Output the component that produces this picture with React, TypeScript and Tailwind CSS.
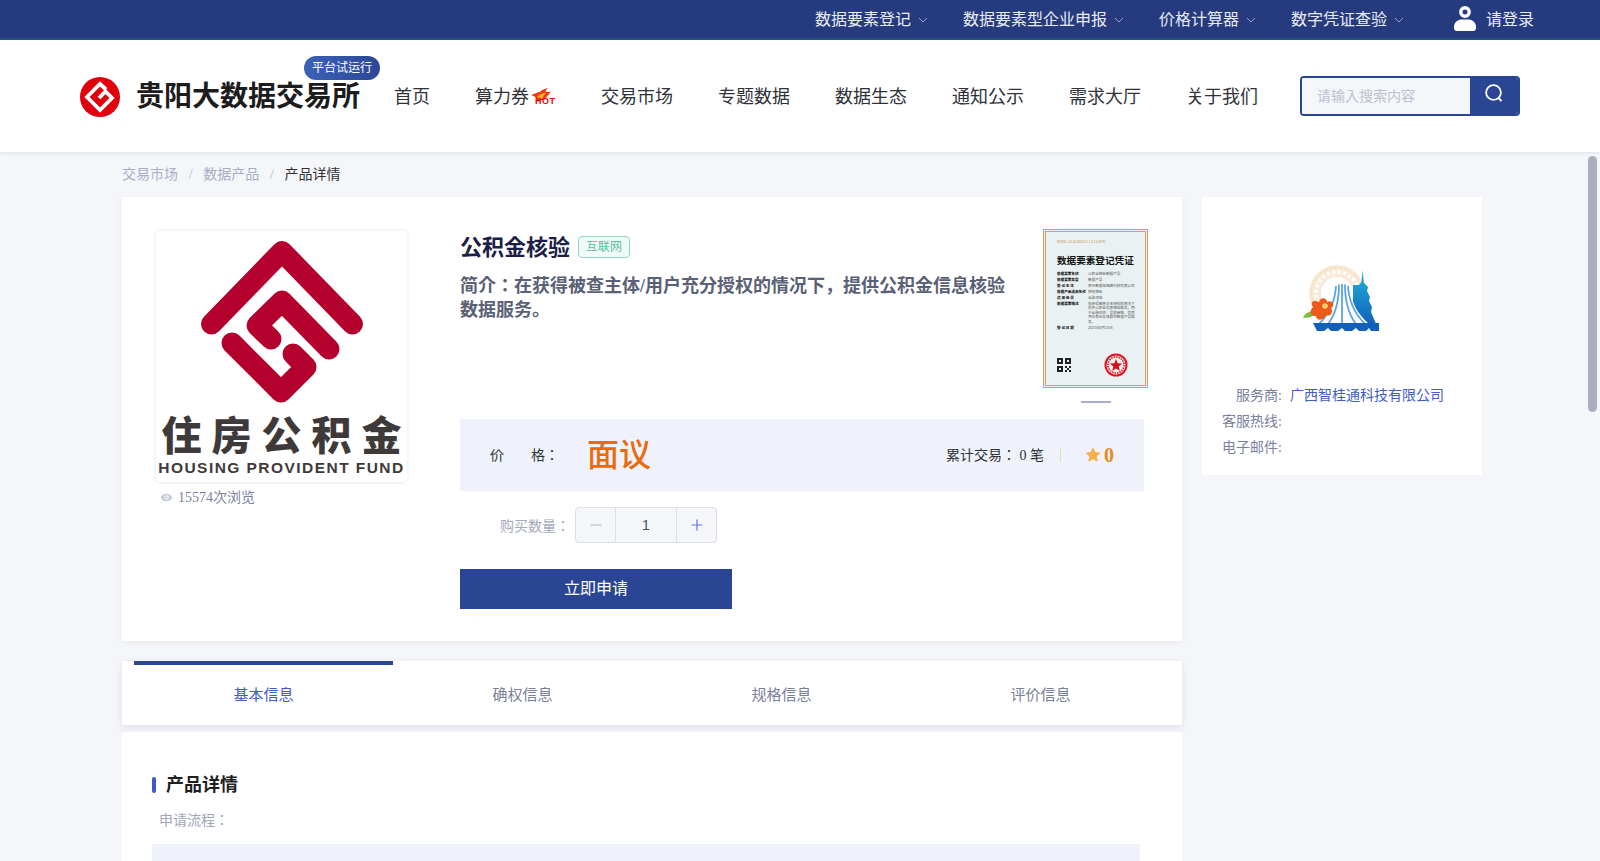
const TOP_LINKS = ["数据要素登记", "数据要素型企业申报", "价格计算器", "数字凭证查验"];
const NAV = ["交易市场", "专题数据", "数据生态", "通知公示", "需求大厅", "关于我们"];
const TABS = ["基本信息", "确权信息", "规格信息", "评价信息"];

const CERT_ROWS = [
  ["数据要素名称", "公积金核验数据产品"],
  ["数据要素类型", "数据产品"],
  ["登 记 主 体", "贵州数据宝网络科技有限公司"],
  ["数据产品通用名称", "授权核验"],
  ["适 用 场 景", "金融领域"],
];

function BrandLogo() {
  return (
    <svg viewBox="0 0 40 40" className="h-10 w-10 shrink-0">
      <circle cx="20" cy="20" r="20" fill="#e2000f" />
      <path
        d="M26 12.5 L20 7 L7 20 L20 33 L32 21 L25.5 14.5 L19 21"
        fill="none"
        stroke="#fff"
        strokeWidth="3.8"
      />
    </svg>
  );
}

function HotBadge() {
  return (
    <span className="relative ml-[2px] block h-[30px] w-[25px]">
      <svg viewBox="0 0 20 12" className="absolute left-0 top-[6px] h-[12px] w-[20px]">
        <path d="M0 7 C4 6 6 4 9 4 C10 2 13 1 17 0 C15 2 14 3 15 4 C17 4 19 4 20 3 C18 7 15 9 12 12 L6 12 C5 9 3 8 0 7Z" fill="#f2380f" />
        <path d="M6 9 C8 7 11 5 15 5 C13 7 12 9 11 11Z" fill="#fbb02d" />
      </svg>
      <span className="absolute left-[4px] top-[15px] text-[9px] font-bold leading-[9px] tracking-[0.5px] text-[#f00000] [font-family:'Liberation_Sans',sans-serif]">
        HOT
      </span>
    </span>
  );
}

function Certificate() {
  return (
    <div className="h-[159px] w-[105px] border-[3px] border-double border-[#cf9f5c] bg-[#eaf1f2] p-[2px]">
      <div className="flex h-full flex-col pl-[9px] pr-[5px] pt-[6px] [font-family:'Noto_Sans_CJK_SC',sans-serif]">
        <p className="text-[3px] leading-[5px] text-[#c08a3a]">DOOR-1 12 16 2023 8 1 1-2 1 5 28 91</p>
        <p className="mt-[9px] whitespace-nowrap text-[9.6px] font-bold leading-[12px] text-[#111]">数据要素登记凭证</p>
        <div className="mt-[6px] flex flex-col gap-[2px]">
          {CERT_ROWS.map(([k, v]) => (
            <div key={k} className="flex text-[3.6px] leading-[4px]">
              <span className="w-[31px] shrink-0 font-bold text-[#111]">{k}</span>
              <span className="whitespace-nowrap text-[#555]">{v}</span>
            </div>
          ))}
          <div className="flex text-[3.6px] leading-[4.4px]">
            <span className="w-[31px] shrink-0 font-bold text-[#111]">数据要素描述</span>
            <span className="text-[#555]">在获得被查主体授权的情况下提供公积金信息核验服务，用于金融风控、贷前审核、信用评估等业务场景的数据产品服务。</span>
          </div>
          <div className="flex text-[3.6px] leading-[4px]">
            <span className="w-[31px] shrink-0 font-bold text-[#111]">登 记 日 期</span>
            <span className="text-[#555]">2023年8月25日</span>
          </div>
        </div>
        <div className="mt-auto mb-[6px] flex items-center gap-[33px]">
          <svg viewBox="0 0 7 7" className="h-[14px] w-[14px]" shapeRendering="crispEdges">
            <path
              d="M0 0h3v3H0zM4 0h3v3H4zM0 4h3v3H0zM4 4h1v1H4zM6 4h1v1H6zM5 5h1v1H5zM4 6h1v1H4zM6 6h1v1H6zM1 1h1v1H1zM5 1h1v1H5zM1 5h1v1H1z"
              fill="#222"
              fillRule="evenodd"
            />
          </svg>
          <svg viewBox="0 0 24 24" className="h-[24px] w-[24px]">
            <circle cx="12" cy="12" r="10.5" fill="#fdeff0" stroke="#e1131f" strokeWidth="2" />
            <circle cx="12" cy="12" r="8" fill="none" stroke="#e1131f" strokeWidth="1.6" strokeDasharray="1.5 1" />
            <path d="M12 6 l1.7 4.2 4.5.3-3.5 2.9 1.1 4.4-3.8-2.4-3.8 2.4 1.1-4.4-3.5-2.9 4.5-.3z" fill="#d8101c" />
          </svg>
        </div>
      </div>
    </div>
  );
}

function ProviderLogo() {
  return (
    <svg viewBox="0 0 90 85" className="h-[85px] w-[90px]">
      <defs>
        <linearGradient id="tower" x1="0" y1="0" x2="0" y2="1">
          <stop offset="0" stopColor="#22b2dc" />
          <stop offset="1" stopColor="#1261ba" />
        </linearGradient>
      </defs>
      <circle cx="42" cy="38" r="28" fill="#f8ead6" />
      <circle cx="42" cy="38" r="21" fill="none" stroke="#fff" strokeWidth="3.500" strokeDasharray="3 2.500" />
      <circle cx="42" cy="38" r="25.500" fill="none" stroke="#f2d9b6" strokeWidth="1" strokeDasharray="2 1.500" />
      <circle cx="42" cy="38" r="16" fill="#fff" />
      <path d="M67.500 15 L69 28 L73 32 L72 36 L75 42 L74 46 L77 52 L76 57 L79 64 L81 69 L58 69 L58 30 L64 30 L66.500 27Z" fill="url(#tower)" />
      <path d="M39 31 C44 27 50 27 55 31 C56 48 62 58 74 69 L20 69 C32 57 38 46 39 31Z" fill="#fff" />
      <path d="M41 31 C40 48 33 60 24 69 M44 29.500 C44 48 40 60 33 69 M47 29 L47 69 M50 29.500 C50 48 54 60 61 69 M53 31 C54 48 61 60 70 69" fill="none" stroke="#5aa5e4" strokeWidth="1.800" />
      <path d="M18 68 H84 V76 H76 L74 73 L71 76 H64 L61 73 L57 76 H50 L47 73 L43 76 H36 L33 73 L29 76 H22Z" fill="#1260b8" />
      <path d="M8 63 C10 58 14 56 19 56 C20 60 18 63 8 63Z" fill="#7cc043" />
      <path d="M18 52 C14 46 20 45 24 47 C25 42 32 42 32 47 C37 44 41 50 36 53 C39 58 35 62 31 60 C29 66 21 66 21 61 C15 62 14 56 18 52Z" fill="#ee5a1a" />
      <circle cx="30" cy="51" r="2.800" fill="#fbd36a" />
    </svg>
  );
}

function FundMark() {
  return (
    <div className="flex h-[251px] w-[251px] flex-col items-center rounded-md bg-white">
      <svg viewBox="0 0 251 180" className="h-[180px] w-[251px] shrink-0">
        <g fill="none" stroke="#b3002d" strokeWidth="21" strokeLinecap="round" strokeLinejoin="round">
          <path d="M55.500 93 L126 20.500 L196.500 93" />
          <path d="M173 118 L126 70 L101 94.500 L115 108" />
          <path d="M76 112 L125 161 L150 136 L137 123" />
        </g>
      </svg>
      <p className="h-[44px] whitespace-nowrap pl-[10px] text-[40px] font-black leading-[44px] tracking-[10px] text-[#3e3a39] [font-family:'Noto_Sans_CJK_SC',sans-serif]">
        住房公积金
      </p>
      <p className="mt-[4px] whitespace-nowrap text-[15.500px] font-bold leading-[18px] tracking-[1.450px] text-[#3e3a39] [font-family:'Liberation_Sans',sans-serif]">
        HOUSING PROVIDENT FUND
      </p>
    </div>
  );
}

export default function App() {
  return (
    <div className="relative h-[861px] w-full overflow-hidden bg-[#f5f6fa] [font-family:'Liberation_Serif','Noto_Sans_CJK_JP',serif]">
      {/* 顶部条 */}
      <div className="flex h-[40px] items-center justify-end border-b-2 border-[#25527e] bg-[#263b7e] pr-[66px] pt-[2px] text-[16px] text-[#e8ebf5]">
        {TOP_LINKS.map((t) => (
          <div key={t} className="mr-[35px] flex items-center gap-[7px]">
            <span>{t}</span>
            <svg viewBox="0 0 10 6" className="h-[6px] w-[10px]" fill="none" stroke="#96a2c8" strokeWidth="1">
              <path d="M1 1 L5 5 L9 1" />
            </svg>
          </div>
        ))}
        <div className="ml-[15px] flex items-center gap-[10px]">
          <svg viewBox="0 0 22 25" className="-mt-[3px] h-[25px] w-[22px]">
            <circle cx="11" cy="6" r="4.200" fill="#263b7e" stroke="#fff" strokeWidth="3.400" />
            <path d="M0 21 C0 16 4 13.500 8 13.500 H14 C18 13.500 22 16 22 21 V22 C22 24 21 25 19 25 H3 C1 25 0 24 0 22Z" fill="#fff" />
          </svg>
          <span>请登录</span>
        </div>
      </div>

      {/* 导航 */}
      <header className="relative z-10 flex h-[112px] items-center bg-white pl-[80px] pt-[2px] shadow-[0_1px_4px_rgba(40,50,90,0.1)]">
        <BrandLogo />
        <div className="relative ml-[16px]">
          <h1 className="whitespace-nowrap text-[28px] font-bold leading-[36px] text-[#1c1c1c]">贵阳大数据交易所</h1>
          <span className="absolute -top-[23px] left-[168px] flex h-[24px] w-[76px] items-center justify-center rounded-full bg-gradient-to-r from-[#3b62b8] to-[#2c4796] text-[12px] text-white">
            平台试运行
          </span>
        </div>
        <nav className="ml-[34px] flex items-center gap-[45px] text-[18px] text-[#30323a]">
          <span>首页</span>
          <span className="flex items-center">
            算力券
            <HotBadge />
          </span>
          {NAV.map((n) => (
            <span key={n}>{n}</span>
          ))}
        </nav>
        <div className="-mt-[2px] ml-[42px] flex h-[40px] w-[220px] overflow-hidden rounded border-2 border-[#2b4595]">
          <input
            placeholder="请输入搜索内容"
            className="h-full w-[168px] bg-[#f5f6fa] pl-[15px] pt-[2px] text-[14px] outline-none placeholder:text-[#bcc0cf]"
          />
          <div className="flex flex-1 items-start justify-center bg-[#2b4595] pt-[5px]">
            <svg viewBox="0 0 20 20" className="h-[20px] w-[20px]" fill="none" stroke="#fff" strokeWidth="1.800" strokeLinecap="round">
              <circle cx="9.500" cy="9.500" r="7.400" />
              <path d="M15 15.500 L17 17.500" />
            </svg>
          </div>
        </div>
      </header>

      {/* 面包屑 */}
      <div className="flex h-[45px] items-center pl-[122px] text-[14px] text-[#a8afc4]">
        <span>交易市场</span>
        <span className="px-[10.700px] text-[#b5bbcc]">/</span>
        <span>数据产品</span>
        <span className="px-[10.700px] text-[#b5bbcc]">/</span>
        <span className="text-[#303133]">产品详情</span>
      </div>

      <div className="flex gap-[20px] pl-[122px]">
        <div className="w-[1060px]">
          {/* 产品卡片 */}
          <section className="flex h-[444px] bg-white p-[32px] shadow-[0_2px_6px_rgba(40,50,90,0.06)]">
            <div className="w-[255px] shrink-0">
              <div className="rounded-md border-2 border-[#f5f6fa]">
                <FundMark />
              </div>
              <div className="mt-[4px] flex h-[18px] items-center gap-[5px] pl-[6px] text-[14px] text-[#7a819c]">
                <svg viewBox="0 0 24 24" className="h-[13px] w-[13px]" fill="#c6ccdc">
                  <path d="M12 5C7 5 3 8 1 12c2 4 6 7 11 7s9-3 11-7c-2-4-6-7-11-7zm0 11a4 4 0 1 1 0-8 4 4 0 0 1 0 8zm0-6.200a2.200 2.200 0 1 0 0 4.400 2.200 2.200 0 0 0 0-4.400z" />
                </svg>
                15574次浏览
              </div>
            </div>

            <div className="ml-[51px] w-[684px] shrink-0">
              <div className="flex h-[190px] justify-between">
                <div className="w-[552px]">
                  <div className="flex h-[36px] items-center gap-[8px]">
                    <h2 className="text-[22px] font-bold text-[#1a2045]">公积金核验</h2>
                    <span className="flex h-[22px] w-[52px] items-center justify-center rounded border border-[#92d8c3] bg-[#f0faf6] text-[12px] text-[#5cbd9f]">
                      互联网
                    </span>
                  </div>
                  <p className="mt-[9px] text-[18px] font-bold leading-[24px] text-[#5a6176]">
                    简介：在获得被查主体/用户充分授权的情况下，提供公积金信息核验数据服务。
                  </p>
                </div>
                <div className="-mr-[4px] flex w-[105px] flex-col items-center">
                  <Certificate />
                  <span className="mt-[13px] h-[2px] w-[30px] bg-[#a8b0c8]" />
                </div>
              </div>

              <div className="flex h-[72px] items-center justify-between bg-[#eff2fa] pl-[30px] pr-[30px]">
                <div className="flex items-center">
                  <span className="flex w-[69px] justify-between text-[14px] text-[#303133]">
                    <span>价</span>
                    <span>格：</span>
                  </span>
                  <span className="ml-[28px] text-[32px] font-medium leading-[40px] text-[#ea6a0c]">面议</span>
                </div>
                <div className="flex items-center">
                  <span className="text-[14px] text-[#303133]">累计交易： 0 笔</span>
                  <span className="ml-[16px] h-[14px] w-px bg-[#f0d9a8]" />
                  <svg viewBox="0 0 24 24" className="ml-[24px] h-[16px] w-[16px]" fill="#f5b04a">
                    <path d="M12 1.800l3 6.600 7.200.8-5.400 4.800 1.500 7.100L12 17.500 5.700 21.100l1.500-7.100L1.800 9.200l7.200-.8z" stroke="#f5b04a" strokeWidth="1.500" strokeLinejoin="round" />
                  </svg>
                  <span className="ml-[3px] text-[20px] font-bold leading-[24px] text-[#e88a1e]">0</span>
                </div>
              </div>

              <div className="mt-[16px] flex h-[36px] items-center pl-[40px]">
                <span className="w-[70px] whitespace-nowrap pt-[2px] text-[14px] text-[#a3a9bc]">购买数量：</span>
                <div className="ml-[5px] flex h-[36px] w-[142px] overflow-hidden rounded border border-[#dcdfe6] bg-[#f5f6fa]">
                  <span className="flex w-[40px] items-center justify-center border-r border-[#dcdfe6]">
                    <svg viewBox="0 0 14 14" className="h-[14px] w-[14px]" stroke="#a8afc4" strokeWidth="1.200"><path d="M1.500 7h11" /></svg>
                  </span>
                  <span className="flex flex-1 items-center justify-center text-[14px] text-[#4a4f60] [font-family:'Liberation_Sans',sans-serif]">1</span>
                  <span className="flex w-[40px] items-center justify-center border-l border-[#dcdfe6]">
                    <svg viewBox="0 0 14 14" className="h-[14px] w-[14px]" stroke="#5b76e0" strokeWidth="1.200"><path d="M1.500 7h11M7 1.500v11" /></svg>
                  </span>
                </div>
              </div>

              <button className="mt-[26px] block h-[40px] w-[272px] bg-[#2b4595] text-[16px] text-white">立即申请</button>
            </div>
          </section>

          {/* 标签页 */}
          <div className="mt-[20px] flex h-[64px] bg-white px-[12px] shadow-[0_3px_8px_rgba(40,50,90,0.1)]">
            {TABS.map((t, i) => (
              <div
                key={t}
                className={
                  i === 0
                    ? "flex flex-1 items-center justify-center border-t-4 border-[#2b4595] text-[15px] text-[#3f5cc0]"
                    : "flex flex-1 items-center justify-center border-t-4 border-transparent text-[15px] text-[#7a8099]"
                }
              >
                {t}
              </div>
            ))}
          </div>

          {/* 详情 */}
          <section className="mt-[7px] h-[200px] bg-white pl-[30px] pr-[42px] pt-[45px]">
            <div className="flex h-[16px] items-center gap-[10px]">
              <span className="h-[16px] w-[4px] rounded-sm bg-[#3a5bc7]" />
              <h3 className="text-[18px] font-bold text-[#1f1f1f]">产品详情</h3>
            </div>
            <p className="mt-[17px] pl-[7px] text-[14px] leading-[22px] text-[#a0a6b8]">申请流程：</p>
            <div className="mt-[12px] h-[40px] bg-[#eff2fa]" />
          </section>
        </div>

        {/* 服务商 */}
        <aside className="h-[278px] w-[280px] bg-white pt-[58px]">
          <div className="flex justify-center pr-[4px]">
            <ProviderLogo />
          </div>
          <div className="mt-[46px] flex flex-col gap-[6px] text-[14px] leading-[20px] text-[#7a819c]">
            <div className="flex">
              <span className="w-[80px] text-right">服务商:</span>
              <span className="ml-[8px] text-[#3f5cc0]">广西智桂通科技有限公司</span>
            </div>
            <div className="flex">
              <span className="w-[80px] text-right">客服热线:</span>
            </div>
            <div className="flex">
              <span className="w-[80px] text-right">电子邮件:</span>
            </div>
          </div>
        </aside>
      </div>

      {/* 滚动条 */}
      <div className="absolute right-[3px] top-[156px] z-20 h-[256px] w-[9px] rounded-full bg-[#a9b0bc]" />
    </div>
  );
}
